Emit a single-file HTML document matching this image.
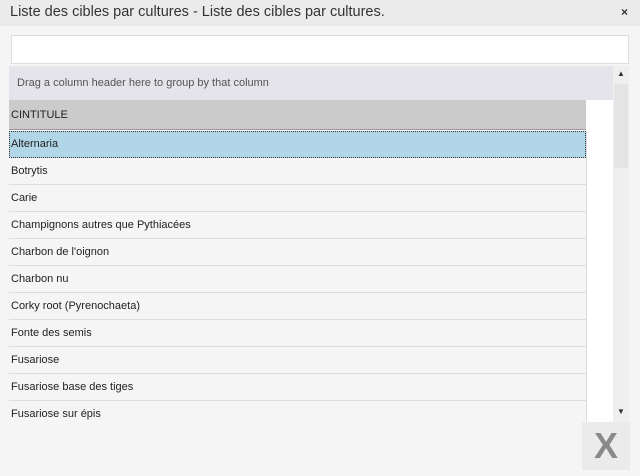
<!DOCTYPE html>
<html><head><style>
body{margin:0;width:640px;height:476px;background:#f5f5f5;font-family:"Liberation Sans",sans-serif;position:relative;overflow:hidden}
.t{position:absolute;left:0;top:0;width:640px;height:26px;background:#ebebeb;}
.t span{position:absolute;left:10px;top:4px;font-size:14.5px;color:#333}
.t b{position:absolute;right:12px;top:5px;font-size:12px;color:#333}
.in{position:absolute;left:11px;top:35px;width:616px;height:27px;background:#fff;border:1px solid #ddd}
.gp{position:absolute;left:9px;top:66px;width:604px;height:34px;background:#e4e4ea;font-size:11px;color:#555;line-height:34px;padding-left:8px;box-sizing:border-box}
.grid{position:absolute;left:9px;top:100px;width:604px;height:322px;background:#fff;overflow:hidden}
.hd{position:absolute;left:0;top:0;width:577px;height:30px;background:#cbcbcb;font-size:11px;line-height:30px;padding-left:2px;box-sizing:border-box;color:#222;border-bottom:1px solid #999}
.rows{position:absolute;left:0;top:31px;width:577px;border-right:1px solid #ddd;}
.r{height:26px;border-bottom:1px solid #ddd;background:#f5f5f5;font-size:11px;line-height:26px;padding-left:2px;color:#222}
.r.s{background:#b1d6e7;border:1px dotted #333;height:25px;line-height:24px;padding-left:1px}
.sb{position:absolute;left:613px;top:66px;width:16px;height:356px;background:#efefef}
.sb .th{position:absolute;left:1px;top:18px;width:14px;height:84px;background:#e4e4e4}
.sb i{position:absolute;left:4px;font-size:8px;font-style:normal;color:#333}
.x{position:absolute;left:582px;top:422px;width:48px;height:48px;background:#ebebeb;color:#8a8a8a;font-weight:bold;font-size:36px;text-align:center;line-height:48px}
</style></head><body>
<div class="t"><span>Liste des cibles par cultures - Liste des cibles par cultures.</span><b>×</b></div>
<div class="in"></div>
<div class="gp">Drag a column header here to group by that column</div>
<div class="grid"><div class="hd">CINTITULE</div>
<div class="rows">
<div class="r s">Alternaria</div>
<div class="r">Botrytis</div>
<div class="r">Carie</div>
<div class="r">Champignons autres que Pythiacées</div>
<div class="r">Charbon de l'oignon</div>
<div class="r">Charbon nu</div>
<div class="r">Corky root (Pyrenochaeta)</div>
<div class="r">Fonte des semis</div>
<div class="r">Fusariose</div>
<div class="r">Fusariose base des tiges</div>
<div class="r">Fusariose sur épis</div>
</div></div>
<div class="sb"><i style="top:3px">▲</i><div class="th"></div><i style="top:341px">▼</i></div>
<div class="x">X</div>
</body></html>
